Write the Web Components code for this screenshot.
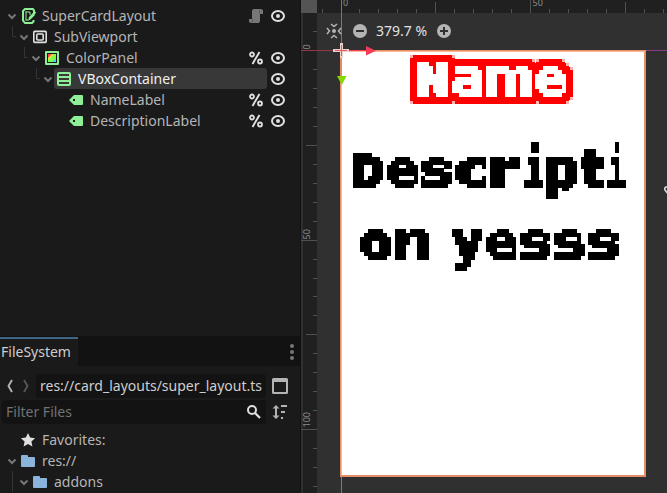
<!DOCTYPE html>
<html lang="en"><head><meta charset="utf-8"><title>Editor</title>
<style>html,body{margin:0;width:667px;height:493px;overflow:hidden;background:#1a1a1a}body{font:14px "Noto Sans",sans-serif;color:#b5b5b5}</style></head>
<body><editor-app></editor-app>
<script>
const define=(name,html,setup)=>customElements.define(name,class extends HTMLElement{
  connectedCallback(){if(this.shadowRoot)return;const r=this.attachShadow({mode:'open'});r.innerHTML=typeof html==='function'?html(this):html;if(setup)setup(r,this);}
});
const icons={
 down:'<path d="M4.5 6.5l3.5 3.5 3.5-3.5" fill="none" stroke="#777" stroke-width="2"/>',
 root:'<path d="M14 5V2.4L12.800 1H5L3 3v9.5L5 15h7l1.5-1.5V12" fill="none" stroke="#8eef97" stroke-width="2"/><path d="M6 3.500v9M5.500 4H10v3M5.500 12H8" fill="none" stroke="#8eef97"/><path d="M8 13l1-4 4-4 2 2-4 4z" fill="#8eef97"/><path d="M12.500 7l3-3" stroke="#8eef97" stroke-width="2"/>',
 viewport:'<rect x="1.800" y="2.400" width="12.400" height="11" rx="1" fill="none" stroke="#e0e0e0" stroke-width="1.6"/><rect x="4.800" y="5" width="6.400" height="6" rx="1" fill="none" stroke="#e0e0e0" stroke-width="1.6"/>',
 color:'<rect x="1" y="1" width="14" height="14" rx="1" fill="#8eef97"/><path d="M3 3h10v10H3z" fill="#1a1a1a"/><path d="M4 4h6l-6 6z" fill="#ff4545"/><path d="M10 4h2v5l-3 3H4v-3z" fill="#80ff45"/><path d="M8 4h2l-6 6V8z" fill="#ffe345"/><path d="M12 8v4H8z" fill="#45d7ff"/>',
 vbox:'<path fill-rule="evenodd" fill="#8eef97" d="M3 1h10a2 2 0 012 2v10a2 2 0 01-2 2H3a2 2 0 01-2-2V3a2 2 0 012-2zm0 2v2h10V3zm0 4v2h10V7zm0 4v2h10v-2z"/>',
 label:'<path fill-rule="evenodd" fill="#8eef97" d="M6 3h8q1 0 1 1v8q0 1-1 1H6L1 8zm-1 4v2h2V7z"/>',
 eye:'<ellipse cx="8" cy="8" rx="6" ry="5" fill="none" stroke="#e0e0e0" stroke-width="2"/><circle cx="8" cy="8" r="2" fill="#e0e0e0"/>',
 percent:'<circle cx="4" cy="4.5" r="2" fill="none" stroke="#e0e0e0" stroke-width="1.8"/><circle cx="12" cy="11.5" r="2" fill="none" stroke="#e0e0e0" stroke-width="1.8"/><path d="M11.5 2L4.5 14" stroke="#e0e0e0" stroke-width="1.9"/>',
 script:'<path d="M6 1h7l2 1v4h-3v7l-1 2H3l-2-1v-3h3V3q0-2 2-2z" fill="#777"/><path d="M11.5 1.5V6M4.5 11v3" stroke="#5d5d5d"/>',
 star:'<path fill="#e0e0e0" d="M8 1l2.1 4.6 5 .6-3.7 3.4 1 5L8 12.100l-4.400 2.500 1-5L.9 6.200l5-.6z"/>',
 folder:'<path fill="#8ab4dc" d="M1 3q0-1 1-1h5q1 0 1 1v1h6q1 0 1 1v8q0 1-1 1H2q-1 0-1-1z"/>',
 back:'<path d="M10 2L6.500 8l3.500 6" fill="none" stroke="#b4b4b4" stroke-width="1.900"/>',
 forward:'<path d="M6 2l3.500 6L6 14" fill="none" stroke="#565656" stroke-width="1.900"/>',
 search:'<circle cx="6" cy="6" r="4" fill="none" stroke="#dedede" stroke-width="2"/><path d="M9 9l5 5" stroke="#dedede" stroke-width="2.300"/>',
 split:'<path fill-rule="evenodd" fill="#b4b4b4" d="M1.500 0h13Q16 0 16 1.500v13q0 1.500-1.500 1.500h-13Q0 16 0 14.500v-13Q0 0 1.500 0zM2 4v10h12V4z"/>',
 sort:'<path fill="#b4b4b4" d="M4 1l3.500 3.500H5v7h2.500L4 15 .5 11.500H3v-7H.5zM9 1h6v2H9zM9 7h4v2H9zM9 13h2v2H9z"/>',
 dots:'<g fill="#777"><circle cx="8" cy="2" r="2"/><circle cx="8" cy="8" r="2"/><circle cx="8" cy="14" r="2"/></g>',
 center:'<g fill="none" stroke="#b4b4b4" stroke-width="1.500"><path d="M1 5l2.500 3L1 11M15 5l-2.500 3L15 11M5 1l3 2.500L11 1M5 15l3-2.500 3 2.500"/></g><circle cx="8" cy="8" r="2" fill="#b4b4b4"/>',
 minus:'<circle cx="8" cy="8" r="7" fill="#b4b4b4"/><path d="M4 8h8" stroke="#303030" stroke-width="2"/>',
 plus:'<circle cx="8" cy="8" r="7" fill="#b4b4b4"/><path d="M4 8h8M8 4v8" stroke="#303030" stroke-width="2"/>'
};
define('ui-icon',el=>`<style>:host{display:block;width:16px;height:16px;flex:none}svg{display:block;overflow:visible}</style><svg width="16" height="16" viewBox="0 0 16 16">${icons[el.getAttribute('name')]}</svg>`);

define('tree-row',el=>{
 const d=+el.getAttribute('depth'),a=k=>el.hasAttribute(k);
 return `<style>:host{display:flex;height:21px;padding-right:14px;align-items:center;line-height:21px}
 .indent{width:${4+d*12}px;flex:none;height:21px}.indent svg{display:block}
 .item{display:flex;flex:1;height:21px;align-items:center;gap:6px;padding-left:2px;margin-left:-2px;margin-right:3px;border-radius:3px}
 :host([selected]) .item{background:#383838;color:#f0f0f0}
 .mark{width:16px;margin-left:-20px;margin-right:6px}.mark+ui-icon{margin-left:0}.label{flex:1;white-space:pre}.item:has(+.mark){margin-right:1px}</style>
 <span class="indent">${a('branch')?`<svg width="${4+d*12}" height="21"><path d="M${d*12+.5} 0v10.500h5" fill="none" stroke="#343434"/></svg>`:a('line')?`<svg width="${4+d*12}" height="21"><path d="M${d*12+.5} 0v21" stroke="#343434"/></svg>`:''}</span>
 ${a('leaf')?'<span style="width:16px;flex:none"></span>':'<ui-icon name="down"></ui-icon>'}
 <span class="item"><ui-icon name="${el.getAttribute('icon')}"></ui-icon><span class="label"><slot></slot></span></span>
 ${a('mark')?`<ui-icon class="mark" name="${el.getAttribute('mark')}"></ui-icon>`:''}
 ${a('eye')?'<ui-icon name="eye"></ui-icon>':''}`;
});

define('scene-tree',`<style>:host{display:block;height:331px;padding-top:5px;border-bottom:1px solid #111}</style>
<tree-row depth="0" icon="root" mark="script" eye>SuperCardLayout</tree-row>
<tree-row depth="1" branch icon="viewport">SubViewport</tree-row>
<tree-row depth="2" branch icon="color" mark="percent" eye>ColorPanel</tree-row>
<tree-row depth="3" branch icon="vbox" selected eye>VBoxContainer</tree-row>
<tree-row depth="4" leaf icon="label" mark="percent" eye>NameLabel</tree-row>
<tree-row depth="4" leaf icon="label" mark="percent" eye>DescriptionLabel</tree-row>`);

define('file-dock',`<style>:host{display:block}
.tabs{display:flex;height:29px;background:#121212;justify-content:space-between;align-items:center}
.tab{box-sizing:border-box;width:78px;height:29px;border-top:2px solid #3f6684;background:#1a1a1a;line-height:26px;padding-left:1px;color:#cecece}
.row{display:flex;align-items:center}.path{height:24px;margin-top:8px;padding-left:2px}.path>ui-icon:nth-child(2){margin-right:2px}
.field{box-sizing:border-box;height:24px;background:#131313;border-radius:3px;line-height:23px;white-space:nowrap;overflow:hidden}
.url{width:230px;padding-left:4px;color:#cecece}.end{margin-left:6px}
.filter{margin-top:2px;padding-left:2px}.search{display:flex;flex:none;width:264px;padding:0 4px 1px 4px;align-items:center;justify-content:space-between;color:#727272}
.list{padding-top:5px}</style>
<div class="tabs"><span class="tab">FileSystem</span><ui-icon name="dots"></ui-icon></div>
<div class="row path"><ui-icon name="back"></ui-icon><ui-icon name="forward"></ui-icon><div class="field url">res://card_layouts/super_layout.ts</div><ui-icon class="end" name="split"></ui-icon></div>
<div class="row filter"><div class="field search"><span>Filter Files</span><ui-icon name="search"></ui-icon></div><ui-icon class="end" name="sort"></ui-icon></div>
<div class="list"><tree-row depth="0" leaf icon="star">Favorites:</tree-row><tree-row depth="0" icon="folder">res://</tree-row><tree-row depth="1" line icon="folder">addons</tree-row></div>`);

// Retro text: real glyphs fitted to their boxes, then sampled on the canvas' texel grid.
const cell=3.797,gx=341.45,gy=50.75;
const weights={D:3,e:1.8,s:1.8,c:2.8,r:3,i:2.6,p:2,t:3,o:3,n:2,y:2.6};
const lines={
 name:[['N',417,448,62,96],['a',452,482,66,96],['m',486,531,66,96],['e',535,565,66,96]],
 desc1:[['D',353,383,153,187],['e',387,417,157,187],['s',421,452,157,187],['c',455,486,157,187],['r',490,520,157,187],['i',524,543,142,187],['p',546,577,157,199],['t',581,603,149,187],['i',607,626,142,187]],
 desc2:[['o',360,391,229,260],['n',395,429,229,260],[' ',432,446,229,260],['y',452,482,229,271],['e',486,516,229,260],['s',520,550,229,260],['s',554,584,229,260],['s',588,619,229,260]]};
const ctx=document.createElement('canvas').getContext('2d');
function textLine(key){
 return `<text xml:space="preserve" stroke-linejoin="miter" stroke-miterlimit="3">`+lines[key].map(([c,a0,a1,b0,b1])=>{
  if(c===' ')return '<tspan> </tspan>';
  const w=key==='name'?(c==='N'?3:1.2):weights[c],h=w/2-.3;
  const x0=a0+h,x1=a1-h,y0=b0+h,y1=b1-h;
  const fam=c==='i'?'DejaVu Sans Mono':'DejaVu Sans';
  ctx.font=`bold 200px "${fam}"`;const m=ctx.measureText(c);
  const s=(y1-y0)/(m.actualBoundingBoxAscent+m.actualBoundingBoxDescent);
  const k=(x1-x0)/(m.actualBoundingBoxRight+m.actualBoundingBoxLeft);
  return `<tspan x="${x0+m.actualBoundingBoxLeft*k}" y="${y1-m.actualBoundingBoxDescent*s}" stroke-width="${w}" font-family="${fam}" font-size="${200*s}" textLength="${m.width*k}" lengthAdjust="spacingAndGlyphs">${c}</tspan>`;
 }).join('')+'</text>';
}
function dots(){let d='';for(let j=0;j<60;j++)for(let i=0;i<80;i++)d+=`M${Math.round(gx+i*cell)+1} ${Math.round(gy+j*cell)+1}h1v1h-1z`;return d;}
function ticks(){let d='';for(let k=-1;k<18;k++){const n=k%10===0?14:k%5===0?11:4;const x=Math.floor(341+k*18.985)+.5;d+=`M${x} ${13-n}V13`;}
 for(let k=-1;k<24;k++){const n=k%10===0?16:k%5===0?11:4;const y=Math.floor(50.5+k*18.96)+.5;d+=`M${317-n} ${y}H317`;}return d;}
define('canvas-view',()=>`<style>:host{display:block;position:relative;width:366px;height:493px;background:#303030;overflow:hidden}
.scene{display:block}.bar{position:absolute;left:25px;top:23px;display:flex;height:16px;align-items:center;color:#e0e0e0;line-height:16px}.bar span{width:51px;margin:0 9px 0 8px;white-space:nowrap}.bar ui-icon:nth-child(2){margin-left:10px}</style>
<svg class="scene" width="366" height="493" viewBox="301 0 366 493">
<defs><mask id="grid" maskUnits="userSpaceOnUse" x="301" y="0" width="366" height="493"><path d="${dots()}" fill="#fff" shape-rendering="crispEdges"/></mask>
<filter id="pixels" filterUnits="userSpaceOnUse" x="301" y="0" width="366" height="493" color-interpolation-filters="sRGB">
<feComponentTransfer><feFuncA type="discrete" tableValues="0 1"/></feComponentTransfer><feMorphology operator="dilate" radius="1" result="a"/><feOffset dx="1" dy="0" result="b"/><feMerge result="c"><feMergeNode in="a"/><feMergeNode in="b"/></feMerge><feOffset dy="1" result="d"/><feMerge><feMergeNode in="c"/><feMergeNode in="d"/></feMerge></filter>
<filter id="outline" filterUnits="userSpaceOnUse" x="301" y="0" width="366" height="493" color-interpolation-filters="sRGB">
<feMorphology in="SourceAlpha" operator="dilate" radius="7 7" result="q"/><feMorphology in="SourceAlpha" operator="dilate" radius="7 4" result="h"/><feMorphology in="SourceAlpha" operator="dilate" radius="4 7" result="v"/>
<feMerge result="shape"><feMergeNode in="h"/><feMergeNode in="v"/></feMerge><feFlood flood-color="#f00"/><feComposite in2="shape" operator="in" result="red"/><feFlood flood-color="#ffb0b0"/><feComposite in2="q" operator="in" result="pink"/><feMerge><feMergeNode in="pink"/><feMergeNode in="red"/><feMergeNode in="SourceGraphic"/></feMerge></filter></defs>
<rect x="303" width="14" height="493" fill="#202020"/><rect x="317" width="350" height="13" fill="#202020"/>
<path d="${ticks()}" stroke="#505050"/><rect x="301" width="16" height="13" fill="#545454"/>
<g fill="#8c8c8c" font-family="Noto Sans" font-size="9"><text x="343" y="6">0</text><text x="532.500" y="6">50</text><text transform="translate(310 49.500) rotate(-90)">0</text><text transform="translate(310 239.500) rotate(-90)">50</text><text transform="translate(310 427.500) rotate(-90)">100</text></g>
<path d="M645 50.500H667" stroke="#8b398d"/><path d="M341.500 476V493" stroke="#688a70"/>
<rect x="341" y="51" width="304" height="425" fill="#fff" stroke="#e58d67" stroke-width="2"/>
<path d="M341 51.500H645M341.500 51V475" stroke="#ffb795"/>
<path d="M301 50.500H341" stroke="#963747"/><path d="M341 50.500H371" stroke="#f53c59"/><path d="M341.500 0V48" stroke="#658e2f"/><path d="M341.500 55V77" stroke="#91b843"/>
<path d="M333 50.500h16M341.500 43v15" stroke="#eecfc9" stroke-width="3"/><path d="M335 50.500h12M341.500 45v11" stroke="#e65c69"/>
<path d="M366 46l10 4.800-10 4.700z" fill="#f53b58"/><path d="M337 76h9.500l-4.700 9z" fill="#85d900"/>
<g filter="url(#outline)"><g filter="url(#pixels)"><g mask="url(#grid)" fill="#fff" stroke="#fff" font-weight="bold">${textLine('name')}</g></g></g>
<g filter="url(#pixels)"><g mask="url(#grid)" fill="#000" stroke="#000" font-weight="bold">${textLine('desc1')}${textLine('desc2')}</g></g>
<path d="M669 187h-3q-2 1-1 3l4 5" fill="none" stroke="#e0e0e0" stroke-width="1.500"/>
</svg>
<div class="bar"><ui-icon name="center"></ui-icon><ui-icon name="minus"></ui-icon><span>379.7 %</span><ui-icon name="plus"></ui-icon></div>`);
define('editor-app',`<style>:host{display:grid;grid-template-columns:301px 366px;width:667px;height:493px;overflow:hidden}.side{box-sizing:border-box;display:flex;flex-direction:column;border-right:1px solid #111;overflow:hidden;height:493px}</style>
<div class="side"><scene-tree></scene-tree><file-dock></file-dock></div><canvas-view></canvas-view>`);
</script></body></html>
